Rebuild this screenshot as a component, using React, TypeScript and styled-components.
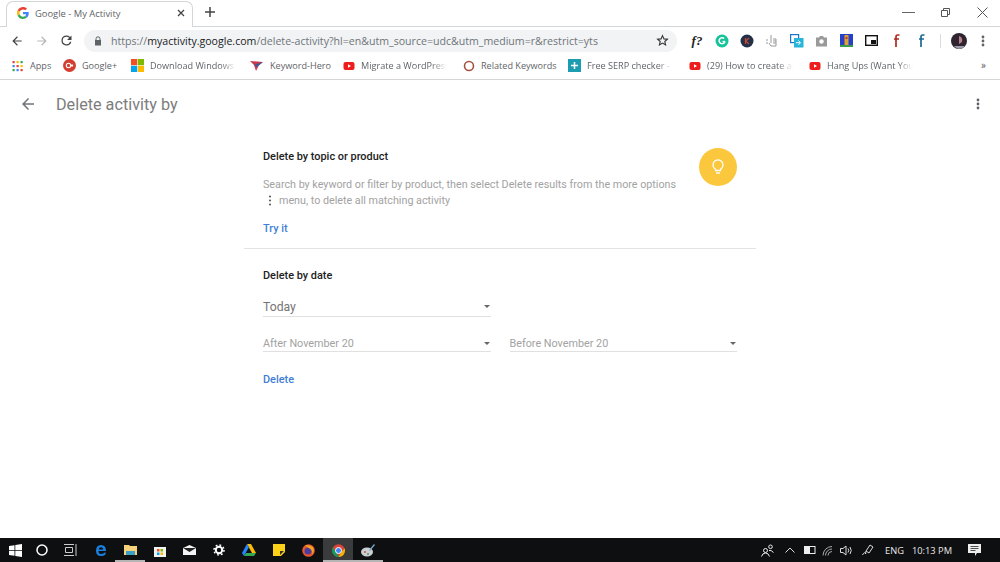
import React from 'react';
import styled, { createGlobalStyle } from 'styled-components';

const Global = createGlobalStyle`
  html, body { margin: 0; padding: 0; background: #fff; }
  body { width: 1000px; height: 562px; overflow: hidden; font-family: Roboto, "Liberation Sans", sans-serif; }
`;

const Screen = styled.div`
  width: 1000px;
  height: 562px;
  display: flex;
  flex-direction: column;
  overflow: hidden;
`;

/* browser chrome */
const TabStrip = styled.div`
  height: 27px;
  flex: none;
  display: flex;
  align-items: flex-end;
  padding-left: 6px;
  border-bottom: 1px solid #d4d5d6;
  box-sizing: border-box;
  position: relative;
`;

const Tab = styled.div`
  width: 187px;
  height: 26px;
  margin-bottom: -1px;
  box-sizing: border-box;
  display: flex;
  align-items: center;
  padding: 0 7px 3px 10px;
  background: #fff;
  border: 1px solid #d4d5d6;
  border-bottom: none;
  border-radius: 7px 7px 0 0;
`;

const TabTitle = styled.span`
  font-family: "Open Sans", sans-serif;
  font-size: 9.4px;
  color: #5f6368;
  margin-left: 6px;
  flex: 1;
`;

const NewTab = styled.div`
  width: 14px;
  height: 14px;
  margin: 0 0 6px 11px;
  display: flex;
`;

const WindowControls = styled.div`
  margin-left: auto;
  display: flex;
  align-self: center;
  align-items: center;
  margin-top: -2px;
`;

const WindowButton = styled.div<{ $w: number }>`
  width: ${(p) => p.$w}px;
  display: flex;
  justify-content: center;
`;

const Toolbar = styled.div`
  height: 27px;
  flex: none;
  display: flex;
  align-items: center;
  padding-left: 4px;
`;

const NavButton = styled.div`
  width: 25px;
  height: 25px;
  display: flex;
  align-items: center;
  justify-content: center;
`;

const Omnibox = styled.div`
  width: 593px;
  height: 22px;
  margin-left: 5px;
  border-radius: 11px;
  background: #f1f3f4;
  display: flex;
  align-items: center;
  padding: 0 8px 0 10px;
  box-sizing: border-box;
`;

const Url = styled.span`
  font-family: "Open Sans", sans-serif;
  font-size: 10.6px;
  color: #70757a;
  margin-left: 9px;
  flex: 1;
  white-space: nowrap;
  b { font-weight: 400; color: #202124; }
`;

const Extensions = styled.div`
  display: flex;
  align-items: center;
  margin-left: 8px;
`;

const ExtSlot = styled.div<{ $w?: number }>`
  width: ${(p) => p.$w ?? 25}px;
  height: 24px;
  display: flex;
  align-items: center;
  justify-content: center;
  font-family: "Liberation Serif", serif;
  font-style: italic;
  font-weight: 700;
  font-size: 13px;
  color: #222;
`;

const ExtDivider = styled.span`
  width: 1px;
  height: 14px;
  margin-left: 6px;
  background: #dcdcdc;
`;

const Bookmarks = styled.div`
  height: 26px;
  flex: none;
  display: flex;
  align-items: center;
  padding: 0 0 2px 11px;
  box-sizing: border-box;
  border-bottom: 1px solid #d4d5d6;
`;

const Bookmark = styled.div<{ $w: number }>`
  width: ${(p) => p.$w}px;
  flex: none;
  display: flex;
  align-items: center;
  font-family: "Open Sans", sans-serif;
  font-size: 9.1px;
  color: #5f6368;
  white-space: nowrap;
  svg { flex: none; margin-right: 6px; }
`;

const BookmarkLabel = styled.span<{ $fade?: boolean }>`
  ${(p) =>
    p.$fade &&
    `
    width: 86px;
    -webkit-mask-image: linear-gradient(to right, #000 82%, transparent);
    mask-image: linear-gradient(to right, #000 82%, transparent);
  `}
`;

const More = styled.span`
  margin-left: auto;
  margin-right: 14px;
  font-size: 11px;
  color: #5f6368;
`;

/* page */
const Page = styled.main`
  flex: 1;
  display: flex;
  flex-direction: column;
  min-height: 0;
`;

const PageHeader = styled.header`
  height: 50px;
  flex: none;
  box-sizing: border-box;
  display: flex;
  align-items: center;
  padding: 0 20px 2px 19px;
`;

const PageTitle = styled.h1`
  margin: 0 0 0 19px;
  font-size: 16.2px;
  font-weight: 400;
  color: #7d7d7d;
  flex: 1;
`;

const Card = styled.div`
  width: 512px;
  margin: 0 auto;
`;

const Section = styled.section`
  padding: 21px 19px 0;
  position: relative;
`;

const TopicSection = styled(Section)`
  height: 119px;
  box-sizing: border-box;
  border-bottom: 1px solid #e3e3e3;
`;

const Heading = styled.h2`
  margin: 0;
  font-size: 10.9px;
  line-height: 12px;
  font-weight: 500;
  color: #212121;
`;

const Body = styled.p`
  margin: 14px 0 0;
  width: 425px;
  font-size: 10.74px;
  line-height: 16px;
  color: #a2a2a2;
`;

const Dots = styled.svg`
  display: inline-block;
  vertical-align: -2px;
  margin: 0 4px 0 0;
`;

const ActionLink = styled.a<{ $top: number }>`
  display: block;
  margin-top: ${(p) => p.$top}px;
  font-size: 10.9px;
  line-height: 12px;
  font-weight: 500;
  color: #3f7fd6;
`;

const TipBadge = styled.div`
  position: absolute;
  top: 18px;
  right: 19px;
  width: 38px;
  height: 38px;
  border-radius: 50%;
  background: #fbc83d;
  display: flex;
  align-items: center;
  justify-content: center;
`;

const SelectRow = styled.div<{ $top: number }>`
  display: flex;
  gap: 19px;
  margin-top: ${(p) => p.$top}px;
`;

const Select = styled.div<{ $large?: boolean }>`
  width: 228px;
  height: ${(p) => (p.$large ? 22 : 18)}px;
  box-sizing: border-box;
  border-bottom: 1px solid #e0e0e0;
  display: flex;
  align-items: center;
  justify-content: space-between;
  padding: 2px 1px 0 0;
  font-size: ${(p) => (p.$large ? 12.2 : 10.8)}px;
  color: ${(p) => (p.$large ? '#757575' : '#a2a2a2')};
`;

const Caret = styled.span`
  width: 0;
  height: 0;
  border-left: 3.5px solid transparent;
  border-right: 3.5px solid transparent;
  border-top: 3.5px solid #666;
`;

/* taskbar */
const Taskbar = styled.footer`
  height: 24px;
  flex: none;
  background: #0e0f11;
  display: flex;
  align-items: stretch;
  color: #eee;
`;

const TaskSlot = styled.div<{ $w: number; $open?: boolean; $active?: boolean }>`
  width: ${(p) => p.$w}px;
  flex: none;
  box-sizing: border-box;
  display: flex;
  align-items: center;
  justify-content: center;
  background: ${(p) => (p.$active ? '#3a3b3c' : 'transparent')};
  border-bottom: 2px solid ${(p) => (p.$open ? '#b5b5b5' : 'transparent')};
  border-top: 2px solid transparent;
`;

const Tray = styled.div`
  margin-left: auto;
  display: flex;
  align-items: center;
`;

const TraySlot = styled.div<{ $w: number }>`
  width: ${(p) => p.$w}px;
  display: flex;
  justify-content: center;
  align-items: center;
  font-family: "Open Sans", sans-serif;
  font-size: 9.3px;
  color: #e8e8e8;
  white-space: nowrap;
`;

const Arrow = ({ dir = 'left', color = '#5f6368', size = 14 }: { dir?: 'left' | 'right'; color?: string; size?: number }) => (
  <svg width={size} height={size} viewBox="0 0 24 24" fill={color} style={dir === 'right' ? { transform: 'scaleX(-1)' } : undefined}>
    <path d="M20 11H7.83l5.59-5.59L12 4l-8 8 8 8 1.41-1.41L7.83 13H20v-2z" />
  </svg>
);

const GoogleG = () => (
  <svg width="12" height="12" viewBox="0 0 48 48">
    <path fill="#EA4335" d="M24 9.5c3.5 0 6.7 1.2 9.2 3.6l6.9-6.9C35.9 2.4 30.5 0 24 0 14.6 0 6.5 5.4 2.6 13.2l8 6.2C12.5 13.7 17.800 9.500 24 9.500z" />
    <path fill="#4285F4" d="M47 24.500c0-1.600-.1-3.100-.4-4.500H24v9h13c-.6 3-2.300 5.500-4.800 7.200l7.700 6C44.400 38 47 31.800 47 24.500z" />
    <path fill="#FBBC05" d="M10.600 28.600c-.5-1.400-.8-3-.8-4.600s.3-3.200.8-4.600l-8-6.200C.9 16.500 0 20.100 0 24s.9 7.500 2.600 10.800l8-6.200z" />
    <path fill="#34A853" d="M24 48c6.500 0 11.900-2.100 15.900-5.800l-7.700-6c-2.200 1.400-4.900 2.300-8.200 2.300-6.200 0-11.500-4.200-13.400-9.900l-8 6.200C6.500 42.600 14.600 48 24 48z" />
  </svg>
);

const YouTube = () => (
  <svg width="12" height="12" viewBox="0 0 12 12">
    <rect x="0.500" y="2" width="11" height="8" rx="2" fill="#ee1c1c" />
    <path d="M5 4.200 8 6 5 7.800z" fill="#fff" />
  </svg>
);

const AppsGrid = () => {
  const colors = ['#ea4335', '#fbbc05', '#34a853', '#4285f4', '#ea4335', '#fbbc05', '#34a853', '#4285f4', '#ea4335'];
  return (
    <svg width="13" height="12" viewBox="0 0 13 12">
      {colors.map((c, i) => (
        <rect key={i} x={1.500 + (i % 3) * 4} y={1 + Math.floor(i / 3) * 4} width="2.200" height="2.200" fill={c} />
      ))}
    </svg>
  );
};

const ThreeDots = ({ color = '#5f6368', h = 12 }: { color?: string; h?: number }) => (
  <svg width="4" height={h} viewBox="0 0 4 12" fill={color}>
    <circle cx="2" cy="2" r="1.400" />
    <circle cx="2" cy="6" r="1.400" />
    <circle cx="2" cy="10" r="1.400" />
  </svg>
);

const bookmarks: { w: number; label: string; fade?: boolean; icon: React.ReactNode }[] = [
  { w: 52, label: 'Apps', icon: <AppsGrid /> },
  {
    w: 68,
    label: 'Google+',
    icon: (
      <svg width="13" height="13" viewBox="0 0 13 13">
        <circle cx="6.500" cy="6.500" r="6.500" fill="#d23f31" />
        <circle cx="5.500" cy="6.500" r="2.200" fill="none" stroke="#fff" strokeWidth="1.100" />
        <path d="M9 5v3M7.800 6.500h2.400" stroke="#fff" strokeWidth="0.900" />
      </svg>
    ),
  },
  {
    w: 119,
    label: 'Download Windows',
    fade: true,
    icon: (
      <svg width="13" height="13" viewBox="0 0 13 13">
        <rect width="6.200" height="6.200" fill="#f25022" />
        <rect x="6.800" width="6.200" height="6.200" fill="#7fba00" />
        <rect y="6.800" width="6.200" height="6.200" fill="#00a4ef" />
        <rect x="6.800" y="6.800" width="6.200" height="6.200" fill="#ffb900" />
      </svg>
    ),
  },
  {
    w: 93,
    label: 'Keyword-Hero',
    icon: (
      <svg width="14" height="12" viewBox="0 0 14 12">
        <path d="M0 1 13 2 9 5 6 11 4 5z" fill="#c8394b" />
        <path d="M4 5 13 2 7 7z" fill="#3d5a9c" />
      </svg>
    ),
  },
  { w: 120, label: 'Migrate a WordPress', fade: true, icon: <YouTube /> },
  {
    w: 105,
    label: 'Related Keywords',
    icon: (
      <svg width="12" height="12" viewBox="0 0 12 12">
        <circle cx="6" cy="6" r="4.500" fill="none" stroke="#a5523f" strokeWidth="1.600" />
      </svg>
    ),
  },
  {
    w: 121,
    label: 'Free SERP checker - G',
    fade: true,
    icon: (
      <svg width="13" height="13" viewBox="0 0 13 13">
        <rect width="13" height="13" fill="#1b9cb0" />
        <path d="M6.500 3v7M3 6.500h7" stroke="#fff" strokeWidth="1.500" />
      </svg>
    ),
  },
  { w: 120, label: '(29) How to create an', fade: true, icon: <YouTube /> },
  { w: 106, label: 'Hang Ups (Want You', fade: true, icon: <YouTube /> },
];

const extensions: { w: number; node: React.ReactNode }[] = [
  { w: 24, node: 'f?' },
  { w: 25, node: <svg width="14" height="14" viewBox="0 0 14 14"><circle cx="7" cy="7" r="6.500" fill="#15c39a" /><path d="M10 7.500a3 3 0 1 1-.8-3" fill="none" stroke="#fff" strokeWidth="1.500" /><path d="M7.500 7.500H10" stroke="#fff" strokeWidth="1.400" /></svg> },
  { w: 25, node: <svg width="14" height="14" viewBox="0 0 14 14"><circle cx="7" cy="7" r="6.500" fill="#22304a" /><path d="M5.500 4v6M9 4 5.800 7 9 10" fill="none" stroke="#c2492f" strokeWidth="1.300" /></svg> },
  { w: 25, node: <svg width="14" height="14" viewBox="0 0 14 14" fill="none" stroke="#9a9a9a" strokeWidth="1"><path d="M6 1v8M8 5h3v7H6L4 9" /><path d="M1 6h2M1 9h2M8 7h3M8 9h3" /></svg> },
  { w: 25, node: <svg width="14" height="14" viewBox="0 0 14 14"><rect x="0.600" y="0.600" width="8" height="8" fill="none" stroke="#1976c8" strokeWidth="1.200" /><rect x="4" y="4" width="9.500" height="9.500" fill="#27b5d8" /><path d="M6 8.700h4M8.500 6.500l2 2.200-2 2.200" stroke="#fff" fill="none" strokeWidth="1" /></svg> },
  { w: 25, node: <svg width="13" height="12" viewBox="0 0 13 12"><path d="M1 2.500h3L5 1h3l1 1.500h3v9H1z" fill="#9a9a9a" /><circle cx="6.500" cy="6.500" r="2.200" fill="#fff" /></svg> },
  { w: 25, node: <svg width="13" height="13" viewBox="0 0 13 13"><rect width="13" height="13" fill="#2740c8" /><rect x="4.500" y="1" width="4" height="10" fill="#e0a030" /><rect x="5.500" y="3" width="2" height="2" fill="#c0392b" /><rect y="11" width="13" height="2" fill="#3c9a4a" /></svg> },
  { w: 25, node: <svg width="13" height="11" viewBox="0 0 13 11"><rect x="0.700" y="0.700" width="11.600" height="9.600" fill="none" stroke="#111" strokeWidth="1.400" /><rect x="6" y="5" width="5" height="4" fill="#111" /></svg> },
  { w: 25, node: <svg width="8" height="13" viewBox="0 0 8 13"><path d="M6.500 1H4.500Q3 1 3 3v10M1 5h5" fill="none" stroke="#b02a20" strokeWidth="1.700" /></svg> },
  { w: 25, node: <svg width="8" height="13" viewBox="0 0 8 13"><path d="M6.500 1H4.500Q3 1 3 3v10M1 5h5" fill="none" stroke="#1c6a96" strokeWidth="1.700" /></svg> },
];

const taskIcons: { w: number; open?: boolean; active?: boolean; node: React.ReactNode }[] = [
  { w: 31, node: <svg width="13" height="13" viewBox="0 0 13 13" fill="#fff"><path d="M0 2l5.500-.8V6H0zM6.300 1.100 13 0v6H6.300zM0 6.800h5.500v4.900L0 11zM6.300 6.800H13V13l-6.700-1z" /></svg> },
  { w: 22, node: <svg width="12" height="12" viewBox="0 0 12 12"><circle cx="6" cy="6" r="5" fill="none" stroke="#fff" strokeWidth="1.500" /></svg> },
  { w: 34, node: <svg width="13" height="12" viewBox="0 0 13 12" fill="none" stroke="#ccc"><path d="M0 .5h10M0 11.500h10M1.500 3.500h7v5h-7zM12 0v12" /></svg> },
  { w: 28, node: <svg width="12" height="13" viewBox="0 0 12 13"><path d="M1 7h10Q11 1 6 1 1 1 1 7q0 5 5 5 3 0 4.500-1.500V8Q8.500 10 6 10 3.500 10 3.500 7z M3.600 5.400h4.800Q8 3.200 6 3.200t-2.400 2.200z" fill="#1a80e0" fillRule="evenodd" /></svg> },
  { w: 30, open: true, node: <svg width="13" height="12" viewBox="0 0 13 12"><path d="M0 1h5l1 1h7v9H0z" fill="#f4d27a" /><rect x="2" y="7" width="9" height="4" fill="#3aa0c8" /></svg> },
  { w: 30, node: <svg width="12" height="13" viewBox="0 0 12 13"><path d="M0 3h12v10H0z" fill="#f2f2f2" /><rect x="3" y="5" width="2.500" height="2.500" fill="#f25022" /><rect x="6.500" y="5" width="2.500" height="2.500" fill="#7fba00" /><rect x="3" y="8.500" width="2.500" height="2.500" fill="#00a4ef" /><rect x="6.500" y="8.500" width="2.500" height="2.500" fill="#ffb900" /></svg> },
  { w: 29, node: <svg width="13" height="10" viewBox="0 0 13 10"><path d="M0 3 6.500 0 13 3v7H0z" fill="#f4f4f4" /><path d="M0 3l6.500 4L13 3" fill="#222" /></svg> },
  { w: 30, node: <svg width="12" height="12" viewBox="0 0 12 12"><circle cx="6" cy="6" r="3.200" fill="none" stroke="#fff" strokeWidth="2" /><circle cx="6" cy="6" r="5" fill="none" stroke="#fff" strokeWidth="1.500" strokeDasharray="1.800 2.100" /></svg> },
  { w: 30, node: <svg width="14" height="12" viewBox="0 0 14 12"><path d="M5 0h4l5 9h-4z" fill="#fbbc05" /><path d="M5 0 0 9l2 3 5-9z" fill="#2684fc" /><path d="M4 9h10l-2 3H2z" fill="#34a853" /></svg> },
  { w: 30, node: <svg width="12" height="12" viewBox="0 0 12 12"><path d="M0 0h12v8l-4 4H0z" fill="#fcd116" /><path d="M7 7h4l-4 4z" fill="#333" /></svg> },
  { w: 29, node: <svg width="13" height="13" viewBox="0 0 13 13"><circle cx="6.500" cy="6.500" r="6.300" fill="#e8572b" /><circle cx="6" cy="7" r="3.500" fill="#4b3ca0" /><path d="M3 1.500q5-1 8 2 2 4-1 7 1-3-1-5-2-1.500-6-4z" fill="#f5a623" /></svg> },
  { w: 30, active: true, open: true, node: <svg width="13" height="13" viewBox="0 0 13 13"><circle cx="6.500" cy="6.500" r="6.300" fill="#db4437" /><path d="M6.500 13A6.500 6.500 0 0 1 .9 3.300L4 8.500 7.500 13z" fill="#0f9d58" /><path d="M12.600 4.300A6.500 6.500 0 0 1 6.500 13L9.500 8z" fill="#f4b400" /><circle cx="6.500" cy="6.500" r="3" fill="#4285f4" stroke="#fff" /></svg> },
  { w: 30, open: true, node: <svg width="14" height="13" viewBox="0 0 14 13"><ellipse cx="6" cy="8" rx="6" ry="4.500" fill="#c9cfd2" /><path d="M8 6 13 0l1 1-5 6z" fill="#7aa7c7" /><circle cx="4" cy="8" r="1" fill="#d04b3a" /><circle cx="7" cy="10" r="1" fill="#4b9b58" /></svg> },
];

export default function App() {
  return (
    <Screen>
      <Global />
      <TabStrip>
        <Tab>
          <GoogleG />
          <TabTitle>Google - My Activity</TabTitle>
          <svg width="8" height="8" viewBox="0 0 8 8" stroke="#444" strokeWidth="1.300"><path d="M1 1l6 6M7 1 1 7" /></svg>
        </Tab>
        <NewTab>
          <svg width="12" height="12" viewBox="0 0 12 12" stroke="#444" strokeWidth="1.500"><path d="M6 1v10M1 6h10" /></svg>
        </NewTab>
        <WindowControls>
          <WindowButton $w={37}><svg width="13" height="10" viewBox="0 0 13 10" stroke="#666"><path d="M0 5.500h13" /></svg></WindowButton>
          <WindowButton $w={37}><svg width="9" height="9" viewBox="0 0 9 9" fill="none" stroke="#555"><path d="M.5 2.500h6v6h-6zM2.500 2.500v-2h6v6h-2" /></svg></WindowButton>
          <WindowButton $w={36}><svg width="11" height="11" viewBox="0 0 11 11" stroke="#555"><path d="M.5.500l10 10M10.500.500l-10 10" /></svg></WindowButton>
        </WindowControls>
      </TabStrip>
      <Toolbar>
        <NavButton><Arrow color="#444" /></NavButton>
        <NavButton><Arrow dir="right" color="#b5b7b9" /></NavButton>
        <NavButton>
          <svg width="15" height="15" viewBox="0 0 24 24" fill="#444"><path d="M17.650 6.350A7.960 7.960 0 0 0 12 4a8 8 0 1 0 7.730 10h-2.080A6 6 0 1 1 12 6c1.660 0 3.140.69 4.220 1.780L13 11h7V4l-2.350 2.350z" /></svg>
        </NavButton>
        <Omnibox>
          <svg width="8" height="10" viewBox="0 0 8 10" fill="#5f6368"><path d="M1 4h6v5.500H1z" /><path d="M2 4V2.800a2 2 0 0 1 4 0V4" fill="none" stroke="#5f6368" /></svg>
          <Url>https://<b>myactivity.google.com</b>/delete-activity?hl=en&amp;utm_source=udc&amp;utm_medium=r&amp;restrict=yts</Url>
          <svg width="13" height="13" viewBox="0 0 24 24" fill="none" stroke="#333" strokeWidth="2"><path d="M12 3l2.700 6 6.300.6-4.800 4.200 1.500 6.300L12 16.800 6.300 20.100l1.500-6.300L3 9.600 9.300 9z" /></svg>
        </Omnibox>
        <Extensions>
          {extensions.map((e, i) => (
            <ExtSlot key={i} $w={e.w}>{e.node}</ExtSlot>
          ))}
          <ExtDivider />
          <ExtSlot $w={35}>
            <svg width="16" height="16" viewBox="0 0 16 16"><circle cx="8" cy="8" r="8" fill="#2f2530" /><path d="M8 3q4 1 3 6l-3 2z" fill="#b9838b" /><path d="M8 16a8 8 0 0 0 6-3H3a8 8 0 0 0 5 3z" fill="#9a9aa8" /></svg>
          </ExtSlot>
          <ExtSlot $w={13}><ThreeDots /></ExtSlot>
        </Extensions>
      </Toolbar>
      <Bookmarks>
        {bookmarks.map((b) => (
          <Bookmark key={b.label} $w={b.w}>{b.icon}<BookmarkLabel $fade={b.fade}>{b.label}</BookmarkLabel></Bookmark>
        ))}
        <More>»</More>
      </Bookmarks>
      <Page>
        <PageHeader>
          <Arrow size={18} color="#70757a" />
          <PageTitle>Delete activity by</PageTitle>
          <ThreeDots />
        </PageHeader>
        <Card>
          <TopicSection>
            <Heading>Delete by topic or product</Heading>
            <Body>
              Search by keyword or filter by product, then select Delete results from the more options{' '}
              <Dots width="12" height="11" viewBox="0 0 12 11" fill="#616161"><circle cx="7" cy="1.500" r="1.100" /><circle cx="7" cy="5.500" r="1.100" /><circle cx="7" cy="9.500" r="1.100" /></Dots>
              menu, to delete all matching activity
            </Body>
            <ActionLink $top={14}>Try it</ActionLink>
            <TipBadge>
              <svg width="16" height="18" viewBox="0 0 16 18" fill="none" stroke="#fff" strokeWidth="1.300">
                <path d="M5.500 12.500v-1.300A5 5 0 1 1 10.500 11.200v1.300z" />
                <path d="M6 15h4" />
              </svg>
            </TipBadge>
          </TopicSection>
          <Section>
            <Heading>Delete by date</Heading>
            <SelectRow $top={13}>
              <Select $large>Today<Caret /></Select>
            </SelectRow>
            <SelectRow $top={17}>
              <Select>After November 20<Caret /></Select>
              <Select>Before November 20<Caret /></Select>
            </SelectRow>
            <ActionLink $top={22}>Delete</ActionLink>
          </Section>
        </Card>
      </Page>
      <Taskbar>
        {taskIcons.map((t, i) => (
          <TaskSlot key={i} $w={t.w} $open={t.open} $active={t.active}>{t.node}</TaskSlot>
        ))}
        <Tray>
          <TraySlot $w={22}><svg width="13" height="13" viewBox="0 0 13 13" fill="none" stroke="#eee"><circle cx="4.500" cy="6.500" r="2" /><path d="M.5 12.500q1-3.500 4-3.500t4 3.500" /><circle cx="9.500" cy="2.800" r="1.800" /><path d="M8 6.500q2-.8 4.500 2" /></svg></TraySlot>
          <TraySlot $w={24}><svg width="10" height="6" viewBox="0 0 10 6" fill="none" stroke="#ddd"><path d="M.5 5.500 5 1l4.500 4.500" /></svg></TraySlot>
          <TraySlot $w={16}><svg width="12" height="8" viewBox="0 0 12 8"><rect x=".5" y=".5" width="10.500" height="7" fill="none" stroke="#eee" /><rect x="1" y="1" width="5" height="6" fill="#eee" /></svg></TraySlot>
          <TraySlot $w={19}><svg width="12" height="11" viewBox="0 0 12 11" fill="none" stroke="#aaa"><path d="M1 10.500a9 9 0 0 1 9-9M3.500 10.500a6.500 6.500 0 0 1 6.500-6.500M6 10.500a4 4 0 0 1 4-4" /></svg></TraySlot>
          <TraySlot $w={18}><svg width="13" height="11" viewBox="0 0 13 11" fill="none" stroke="#ddd"><path d="M.5 3.500h2.500L6 1v9L3 7.500H.5zM8 3.500q1.500 2 0 4M10 2q2.500 3.500 0 7" /></svg></TraySlot>
          <TraySlot $w={25}><svg width="12" height="12" viewBox="0 0 12 12" fill="none" stroke="#ddd"><path d="M4 7 8 1l3 2-4 6zM4 7 3.500 10M.5 11q2-4 3.500-1" /></svg></TraySlot>
          <TraySlot $w={29}>ENG</TraySlot>
          <TraySlot $w={46}>10:13 PM</TraySlot>
          <TraySlot $w={38}><svg width="13" height="12" viewBox="0 0 13 12"><path d="M0 0h13v9H9l-2 3V9H0z" fill="#eee" /><path d="M2.500 2.500h8M2.500 4.500h8M2.500 6.500h5" stroke="#222" strokeWidth=".8" /></svg></TraySlot>
          <TraySlot $w={7} />
        </Tray>
      </Taskbar>
    </Screen>
  );
}
